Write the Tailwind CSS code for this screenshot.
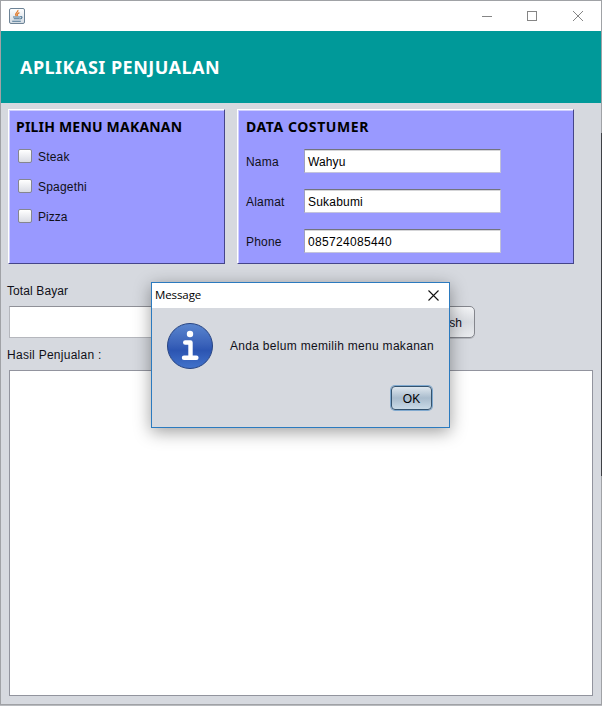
<!DOCTYPE html>
<html lang="id">
<head>
<meta charset="utf-8">
<title>Aplikasi Penjualan</title>
<script src="https://cdn.jsdelivr.net/npm/@tailwindcss/browser@4"></script>
</head>
<body class="relative h-[706px] w-[602px] overflow-hidden bg-[#b9bbbf] font-['Liberation_Sans',sans-serif] text-[12px] leading-[14px] text-[#101018]">
<main class="flex h-[705px] w-[602px] flex-col border border-[#a0a2a6] bg-[#d6d9df]">
  <header class="flex h-[30px] shrink-0 items-center bg-white pl-2">
    <svg class="size-4" viewBox="0 0 16 16" fill="none">
      <defs><linearGradient id="app" x1="0" y1="0" x2="0" y2="1"><stop stop-color="#fff"/><stop offset="1" stop-color="#d3dbe3"/></linearGradient></defs>
      <rect x=".5" y=".5" width="15" height="15" rx="1.5" fill="url(#app)" stroke="#6d8396"/>
      <path d="M8.9 2C9.7 4.4 4.6 5 7.4 8.2M10.4 4.6C7.8 5.8 8 6.6 8.8 7.8" stroke="#e17a2b" stroke-width="1.2"/>
      <path d="M4 9h7M4.8 10.8h5.6M3.2 13.2h8.6M11.2 8.7c2.7-.5 2.2 1.9-.6 2.3" stroke="#4d7694" stroke-width="1.1"/>
    </svg>
    <div class="ml-auto flex gap-[35px] pr-[17px]">
      <svg class="size-[11px]" viewBox="0 0 11 11" stroke="#858585" fill="none"><path d="M1 5.5h10"/></svg>
      <svg class="size-[11px]" viewBox="0 0 11 11" stroke="#858585" fill="none"><rect x=".5" y=".5" width="9" height="9"/></svg>
      <svg class="size-[11px]" viewBox="0 0 11 11" stroke="#858585" fill="none"><path d="m0 0 10 10m0-10-10 10"/></svg>
    </div>
  </header>
  <section class="flex h-[72px] shrink-0 items-center bg-[#009999] pl-[19px]">
    <h1 class="whitespace-nowrap font-['Noto_Sans',sans-serif] text-[18px] leading-6 font-bold tracking-[.47px] text-white">APLIKASI PENJUALAN</h1>
  </section>
  <div class="flex shrink-0 gap-3 pt-[6px] pl-[7px]">
    <section class="h-[155px] w-[217px] border border-t-white border-r-[#45458a] border-b-[#45458a] border-l-white bg-[#9999ff] pt-[8px] pl-[7px] shadow-[inset_1px_1px_0_#cfcfff]">
      <h2 class="whitespace-nowrap font-['Noto_Sans',sans-serif] text-[14px] leading-[18px] font-bold tracking-[.2px] text-black">PILIH MENU MAKANAN</h2>
      <div class="flex flex-col gap-4 pt-[13px] pl-[2px]">
        <label class="flex h-[14px] items-center gap-[6px]"><span class="size-[14px] rounded-[2px] border border-[#85868f] bg-linear-to-b from-white to-[#d9dbe3]"></span><span class="pt-[2px] tracking-[.2px]">Steak</span></label>
        <label class="flex h-[14px] items-center gap-[6px]"><span class="size-[14px] rounded-[2px] border border-[#85868f] bg-linear-to-b from-white to-[#d9dbe3]"></span><span class="pt-[2px] tracking-[.2px]">Spagethi</span></label>
        <label class="flex h-[14px] items-center gap-[6px]"><span class="size-[14px] rounded-[2px] border border-[#85868f] bg-linear-to-b from-white to-[#d9dbe3]"></span><span class="pt-[2px]">Pizza</span></label>
      </div>
    </section>
    <section class="h-[155px] w-[337px] border border-t-white border-r-[#45458a] border-b-[#45458a] border-l-white bg-[#9999ff] pt-[8px] pl-[8px] shadow-[inset_1px_1px_0_#cfcfff]">
      <h2 class="whitespace-nowrap font-['Noto_Sans',sans-serif] text-[14px] leading-[18px] font-bold tracking-[.57px] text-black">DATA COSTUMER</h2>
      <div class="grid grid-cols-[58px_197px] items-center gap-y-4 pt-[13px] tracking-[.2px]">
        <span class="pt-[2px]">Nama</span><div class="flex h-6 items-center border border-t-[#73747d] border-r-[#c0c0d8] border-b-[#c4c4dc] border-l-[#a0a0bc] bg-white pt-[2px] pl-[3px] tracking-[.1px] text-black shadow-[inset_0_1px_0_#d5d5d8]">Wahyu</div>
        <span class="pt-[2px]">Alamat</span><div class="flex h-6 items-center border border-t-[#73747d] border-r-[#c0c0d8] border-b-[#c4c4dc] border-l-[#a0a0bc] bg-white pt-[2px] pl-[3px] text-black shadow-[inset_0_1px_0_#d5d5d8]">Sukabumi</div>
        <span class="pt-[2px]">Phone</span><div class="flex h-6 items-center border border-t-[#73747d] border-r-[#c0c0d8] border-b-[#c4c4dc] border-l-[#a0a0bc] bg-white pt-[2px] pl-[3px] tracking-[.33px] text-black shadow-[inset_0_1px_0_#d5d5d8]">085724085440</div>
      </div>
    </section>
  </div>
  <p class="shrink-0 pt-5 pl-[6px] tracking-[.1px]">Total Bayar</p>
  <div class="flex shrink-0 pt-2 pl-2">
    <div class="h-8 w-[300px] border border-[#b5b7bd] border-t-[#8f9097] bg-white"></div>
    <div class="ml-[71px] flex h-8 w-[95px] items-center justify-end rounded-[5px] border border-[#84868d] bg-linear-to-b from-[#f2f3f5] via-[#d8dbe0] to-[#e9ebee] pt-[2px] pr-3 shadow-[0_1px_0_#b5b8be]">Refresh</div>
  </div>
  <p class="shrink-0 pt-[10px] pl-[6px] tracking-[.27px]">Hasil Penjualan :</p>
  <div class="mt-2 ml-2 h-[326px] w-[584px] shrink-0 border border-[#92949e] bg-white"></div>
</main>
<div class="absolute top-[133px] right-0 h-[343px] w-px bg-[#3e4045]"></div>

<div role="dialog" class="absolute top-[282px] left-[151px] flex h-[146px] w-[299px] flex-col border border-[#2b7abf] bg-[#d6d9df] shadow-[0_4px_16px_rgba(0,0,0,.38)]">
  <div class="flex h-[25px] items-center justify-between bg-white pr-[10px] pl-[3px]">
    <span class="-mt-[2px] font-['Open_Sans',sans-serif] text-[11.5px] tracking-[-.1px] text-black">Message</span>
    <svg class="size-[11px]" viewBox="0 0 11 11" stroke="#111" fill="none" stroke-width="1.1"><path d="m.5.5 10 10m0-10-10 10"/></svg>
  </div>
  <div class="flex items-center pt-[14px] pl-[14px]">
    <svg class="size-12 shrink-0" viewBox="0 0 48 48">
      <defs><linearGradient id="info" x1="0" y1="0" x2="0" y2="1"><stop stop-color="#5a86cf"/><stop offset=".45" stop-color="#3b63ba"/><stop offset=".6" stop-color="#2c55b2"/><stop offset="1" stop-color="#4273cb"/></linearGradient></defs>
      <circle cx="24" cy="24" r="22.5" fill="url(#info)" stroke="#284583"/>
      <circle cx="24" cy="12" r="3.2" fill="#fff"/>
      <path d="M19.2 20.5h5.3v15M18 35.7h12.4" fill="none" stroke="#fff" stroke-width="4.4" stroke-linecap="round" stroke-linejoin="round"/>
    </svg>
    <span class="ml-4 whitespace-nowrap tracking-[.3px]">Anda belum memilih menu makanan</span>
  </div>
  <div class="flex justify-end pt-[16px] pr-[17px]">
    <div class="flex h-6 w-[41px] items-center justify-center rounded-[4px] border border-[#34536f] bg-linear-to-b from-[#dfe7ee] via-[#a9bccd] to-[#c9dae7] pt-[2px] text-black shadow-[0_0_0_1px_#80a9cf]">OK</div>
  </div>
</div>
</body>
</html>
